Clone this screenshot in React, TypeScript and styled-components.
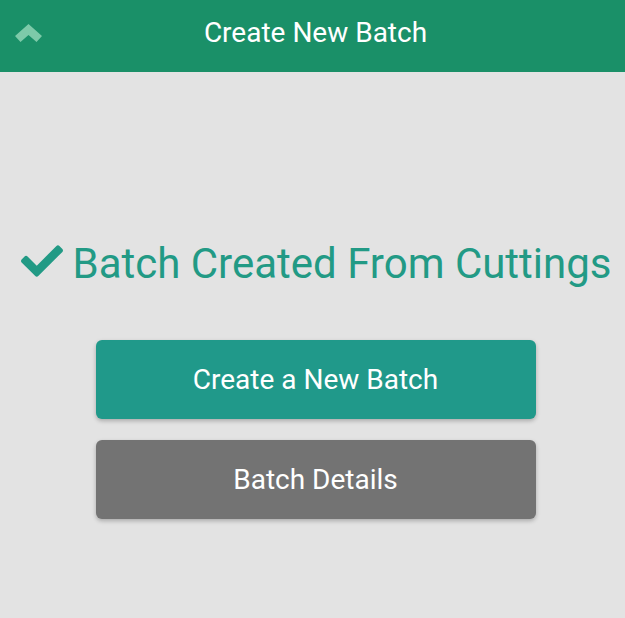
import React from "react";
import styled, { createGlobalStyle } from "styled-components";
import { FaCheck } from "react-icons/fa";

const GlobalStyle = createGlobalStyle`
  html, body {
    margin: 0;
    padding: 0;
    background: #e3e3e3;
    font-family: Roboto, "Noto Sans", sans-serif;
  }
`;

const Page = styled.div`
  display: flex;
  flex-direction: column;
  width: 625px;
  height: 618px;
  background: #e3e3e3;
`;

const Header = styled.header`
  position: relative;
  display: flex;
  align-items: center;
  justify-content: center;
  height: 72px;
  background: #1a9068;
  color: #ffffff;
`;

const Title = styled.h1`
  margin: 0 0 8px 6px;
  font-size: 28px;
  font-weight: 400;
`;

const BackButton = styled.button`
  position: absolute;
  left: 15px;
  top: 24px;
  padding: 0;
  border: none;
  background: none;
  display: flex;

  svg {
    width: 27px;
    height: 18px;
    fill: #7dcaa9;
  }
`;

const Content = styled.main`
  display: flex;
  flex-direction: column;
  align-items: center;
  padding: 165px 0 0 6px;
`;

const Message = styled.h2`
  display: flex;
  align-items: center;
  gap: 9px;
  margin: 0;
  color: #229a85;
  font-size: 42px;
  font-weight: 400;
  line-height: 54px;

  svg {
    font-size: 42px;
    margin: -6px 0 0 2px;
  }
`;

const Actions = styled.div`
  display: flex;
  flex-direction: column;
  gap: 21px;
  margin-top: 49px;
`;

const ActionButton = styled.button<{ $tone: "primary" | "neutral" }>`
  width: 440px;
  height: 79px;
  border: none;
  border-radius: 6px;
  background: ${(p) => (p.$tone === "primary" ? "#20998a" : "#737373")};
  color: #ffffff;
  font-family: Roboto, "Noto Sans", sans-serif;
  font-size: 28px;
  box-shadow: 0 2px 4px rgba(0, 0, 0, 0.25);
  cursor: pointer;
`;

const ChevronUp = () => (
  <svg viewBox="0 0 27 18" aria-hidden="true">
    <polygon points="13.5,0 27,12 21.5,18 13.5,11 5.5,18 0,12" />
  </svg>
);

export default function App() {
  return (
    <Page>
      <GlobalStyle />
      <Header>
        <BackButton aria-label="Collapse">
          <ChevronUp />
        </BackButton>
        <Title>Create New Batch</Title>
      </Header>
      <Content>
        <Message>
          <FaCheck />
          Batch Created From Cuttings
        </Message>
        <Actions>
          <ActionButton $tone="primary">Create a New Batch</ActionButton>
          <ActionButton $tone="neutral">Batch Details</ActionButton>
        </Actions>
      </Content>
    </Page>
  );
}
